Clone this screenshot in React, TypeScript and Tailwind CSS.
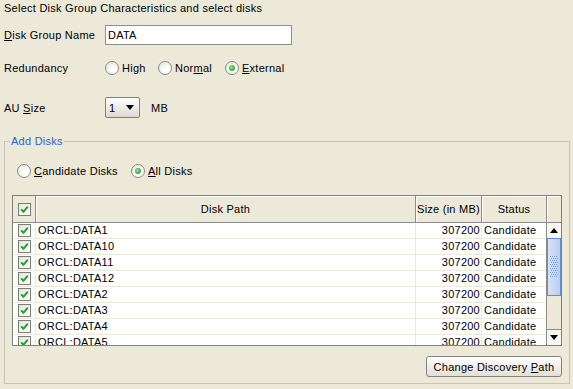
import React from 'react';

const disks = ['DATA1', 'DATA10', 'DATA11', 'DATA12', 'DATA2', 'DATA3', 'DATA4', 'DATA5'];

const Radio = ({ checked }: { checked?: boolean }) => (
    <span className="w-[14px] h-[14px] rounded-full border border-[#8a8a86] bg-[radial-gradient(circle_at_65%_70%,#ffffff_20%,#e2e0d6_100%)] flex items-center justify-center shrink-0">
        {checked && <span className="w-[6px] h-[6px] rounded-full bg-[radial-gradient(circle_at_40%_40%,#9be39b_0%,#2fa52f_70%)]" />}
    </span>
);

const Check = () => (
    <span className="w-[13px] h-[13px] border border-[#7c7c78] bg-[linear-gradient(135deg,#e6e4dc,#ffffff)] flex items-center justify-center shrink-0">
        <svg width="9" height="9" viewBox="0 0 9 9">
            <path d="M1.2 4.4 L3.5 6.8 L7.8 1.6" fill="none" stroke="#22a322" strokeWidth="2" />
        </svg>
    </span>
);

const Arrow = ({ down }: { down?: boolean }) => (
    <svg width="8" height="5" viewBox="0 0 8 5">
        <path d={down ? 'M0 0 L8 0 L4 5 Z' : 'M0 5 L8 5 L4 0 Z'} fill="#000" />
    </svg>
);

export default function App() {
    return (
        <div className="w-[573px] h-[389px] overflow-hidden bg-[#ece9d8] text-black text-[11px] leading-[16px] tracking-[0.25px] font-['Liberation_Sans',Arial,sans-serif]">
            <div className="pl-[4px] h-[16px]">Select Disk Group Characteristics and select disks</div>

            {/* Disk group name */}
            <div className="mt-[9px] h-[20px] flex items-center pl-[4px]">
                <span className="w-[101px]"><u>D</u>isk Group Name</span>
                <div className="w-[187px] h-[20px] border border-[#8e8e8a] bg-white pl-[2px] flex items-center">DATA</div>
            </div>

            {/* Redundancy */}
            <div className="mt-[15px] h-[16px] flex items-center pl-[4px]">
                <span className="w-[101px]">Redundancy</span>
                <span className="w-[53px] flex items-center gap-[3px]"><Radio /><span>Hi<u>g</u>h</span></span>
                <span className="w-[67px] flex items-center gap-[3px]"><Radio /><span>Nor<u>m</u>al</span></span>
                <span className="flex items-center gap-[3px]"><Radio checked /><span><u>E</u>xternal</span></span>
            </div>

            {/* AU size */}
            <div className="mt-[21px] h-[21px] flex items-center pl-[4px]">
                <span className="w-[101px]">AU <u>S</u>ize</span>
                <div className="w-[35px] h-[21px] rounded-[2px] border border-[#7f7f7b] bg-[linear-gradient(#ffffff,#dddad0)] flex items-center justify-between pl-[3px] pr-[5px]">
                    <span>1</span>
                    <Arrow down />
                </div>
                <span className="ml-[11px]">MB</span>
            </div>

            {/* Add disks group */}
            <fieldset className="mt-[15px] ml-[4px] w-[566px] border border-[#c6c4b9] pb-[6px] flex flex-col">
                <legend className="ml-[5px] px-[1px] text-[#2f63c9]">Add Disks</legend>

                <div className="mt-[14px] h-[16px] flex items-center pl-[12px]">
                    <span className="w-[114px] flex items-center gap-[3px]"><Radio /><span><u>C</u>andidate Disks</span></span>
                    <span className="flex items-center gap-[3px]"><Radio checked /><span><u>A</u>ll Disks</span></span>
                </div>

                {/* Disk table */}
                <div className="mt-[16px] ml-[7px] w-[550px] border border-[#7f7f7b] flex flex-col">
                    <div className="h-[27px] flex border-b border-[#8c8c88] bg-[#ece9d8]">
                        <div className="w-[23px] border-r border-[#8c8c88] flex items-center justify-center"><Check /></div>
                        <div className="w-[380px] border-r border-[#8c8c88] shadow-[inset_1px_1px_0_#fff] flex items-center justify-center">Disk Path</div>
                        <div className="w-[66px] border-r border-[#8c8c88] shadow-[inset_1px_1px_0_#fff] flex items-center justify-center whitespace-nowrap">Size (in MB)</div>
                        <div className="w-[64px] shadow-[inset_1px_1px_0_#fff] flex items-center justify-center">Status</div>
                        <div className="flex-1 border-l border-[#8c8c88] shadow-[inset_1px_1px_0_#fff]" />
                    </div>
                    <div className="h-[122px] flex">
                        <div className="w-[533px] overflow-hidden bg-white">
                            {disks.map(d => (
                                <div key={d} className="h-[16px] flex border-b border-[#ece9d8]">
                                    <div className="w-[23px] border-r border-[#ece9d8] flex items-center justify-center"><Check /></div>
                                    <div className="w-[380px] border-r border-[#ece9d8] pl-[2px] leading-[15px]">ORCL:{d}</div>
                                    <div className="w-[66px] border-r border-[#ece9d8] pr-[1px] text-right leading-[15px]">307200</div>
                                    <div className="flex-1 pl-[2px] leading-[15px] whitespace-nowrap overflow-hidden">Candidate</div>
                                </div>
                            ))}
                        </div>
                        <div className="flex-1 border-l border-[#8c8c88] flex flex-col bg-[#ece9d8]">
                            <div className="h-[15px] bg-[#f6f5f0] flex items-center justify-center"><Arrow /></div>
                            <div className="h-[58px] border border-[#5d8fd6] bg-[linear-gradient(90deg,#d7e3f4,#b9cdec)] flex items-center justify-center">
                                <svg width="8" height="22" viewBox="0 0 8 22">
                                    {Array.from({ length: 11 }).map((_, r) =>
                                        [0, 1, 2, 3].map(c => (
                                            <rect key={`${r}-${c}`} x={c * 2 + (r % 2)} y={r * 2} width="1" height="1" fill="#7b9fd6" />
                                        ))
                                    )}
                                </svg>
                            </div>
                            <div className="flex-1" />
                            <div className="h-[16px] border-t border-[#8c8c88] bg-[#f6f5f0] flex items-center justify-center"><Arrow down /></div>
                        </div>
                    </div>
                </div>

                <button className="mt-[10px] mr-[7px] self-end w-[136px] h-[21px] rounded-[3px] border border-[#84837e] bg-[linear-gradient(#ffffff,#e2dfd4)] flex items-center justify-center">
                    <span>Change Discovery <u>P</u>ath</span>
                </button>
            </fieldset>
        </div>
    );
}
